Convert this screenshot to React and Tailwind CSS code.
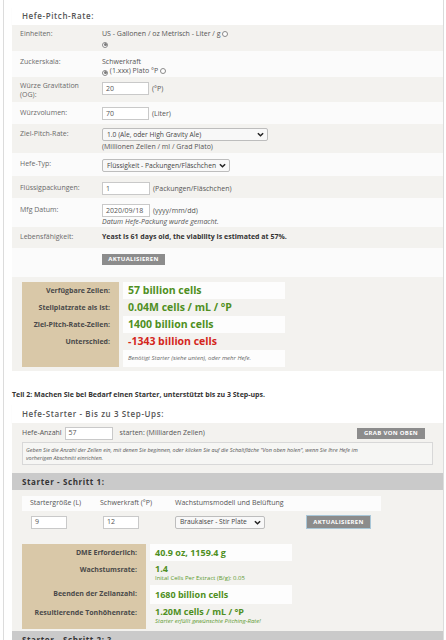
import React from 'react';

const Radio = ({ checked }) => (
  <span className="inline-flex h-[6px] w-[6px] items-center justify-center rounded-full border border-[#8a8a8a] bg-white align-[-1px]">
    {checked && <span className="h-[3px] w-[3px] rounded-full bg-[#7a7a7a]" />}
  </span>
);

const Field = ({ value, className }) => (
  <div className={`flex h-[13px] items-center border border-[#c9c9c9] bg-white pl-[3px] text-[7px] text-[#555] ${className}`}>
    {value}
  </div>
);

const Chevron = () => (
  <svg width="7" height="5" viewBox="0 0 8 5" className="shrink-0">
    <path d="M1 1l3 3 3-3" stroke="#222" strokeWidth="1.7" fill="none" />
  </svg>
);

const Select = ({ text, className }) => (
  <div className={`flex h-[13px] items-center justify-between gap-[2px] whitespace-nowrap rounded-[2px] border border-[#bdbdbd] bg-[#f8f8f8] pl-[4px] pr-[3px] text-[6.7px] text-[#444] ${className}`}>
    <span>{text}</span>
    <Chevron />
  </div>
);

const Button = ({ children, className }) => (
  <div className={`flex items-center justify-center bg-[#8c8c8c] text-[6px] font-bold tracking-[0.3px] text-white ${className}`}>
    {children}
  </div>
);

const Row = ({ label, className, labelPad, valuePad, children }) => (
  <div className={`flex ${className}`}>
    <div className={`w-[90px] shrink-0 pl-[8px] pr-[6px] text-[7px] leading-[9px] text-[#6a6a6a] ${labelPad}`}>{label}</div>
    <div className={`flex-1 text-[7px] leading-[9px] text-[#555] ${valuePad}`}>{children}</div>
  </div>
);

const ResultRow = ({ label, white, h, children, labelW, valueW }) => (
  <div className={`flex ${h}`}>
    <div className={`${labelW} shrink-0 bg-[#d9c8a8] pr-[9px] pt-[4px] text-right text-[7px] font-bold leading-[9px] text-[#4a4a4a]`}>
      {label}
    </div>
    <div className={`ml-[4px] ${valueW} pl-[5px] ${white ? 'bg-[#fdfdfd]' : ''}`}>{children}</div>
  </div>
);

export default function App() {
  return (
    <div className="min-h-screen bg-white font-['Open_Sans',sans-serif]">
      <div className="ml-[3px] w-[441px] border-x border-[#dcdcdc] pb-[20px] pl-[8px] pt-[7px]">
        {/* Panel 1 */}
        <div className="flex h-[18px] items-center bg-white pl-[10px] text-[8px] font-semibold tracking-[0.6px] text-[#555] shadow-[0_1px_1px_rgba(0,0,0,0.06)]">
          Hefe-Pitch-Rate:
        </div>

        <Row label="Einheiten:" className="h-[26px] bg-[#f3f2ef]" labelPad="pt-[4px]" valuePad="pt-[4px]">
          <div>
            US - Gallonen / oz Metrisch - Liter / g <Radio />
          </div>
          <div>
            <Radio checked />
          </div>
        </Row>

        <Row label="Zuckerskala:" className="h-[26px] bg-[#fbfbfb]" labelPad="pt-[6px]" valuePad="pt-[6px]">
          <div>Schwerkraft</div>
          <div>
            <Radio checked /> (1.xxx) Plato °P <Radio />
          </div>
        </Row>

        <Row label="Würze Gravitation (OG):" className="h-[25px] bg-[#f3f2ef]" labelPad="pt-[4px]" valuePad="pt-[5px]">
          <div className="flex items-center gap-[3px]">
            <Field value="20" className="w-[47px]" />
            <span>(°P)</span>
          </div>
        </Row>

        <Row label="Würzvolumen:" className="h-[22px] bg-[#fbfbfb]" labelPad="pt-[6px]" valuePad="pt-[5px]">
          <div className="flex items-center gap-[3px]">
            <Field value="70" className="w-[47px]" />
            <span>(Liter)</span>
          </div>
        </Row>

        <Row label="Ziel-Pitch-Rate:" className="h-[29px] bg-[#f3f2ef]" labelPad="pt-[5px]" valuePad="pt-[4px]">
          <Select text="1.0 (Ale, oder High Gravity Ale)" className="w-[166px]" />
          <div className="mt-[1px]">(Millionen Zellen / ml / Grad Plato)</div>
        </Row>

        <Row label="Hefe-Typ:" className="h-[23px] bg-[#fbfbfb]" labelPad="pt-[6px]" valuePad="pt-[6px]">
          <Select text="Flüssigkeit - Packungen/Fläschchen" className="w-[128px]" />
        </Row>

        <Row label="Flüssigpackungen:" className="h-[22px] bg-[#f3f2ef]" labelPad="pt-[7px]" valuePad="pt-[6px]">
          <div className="flex items-center gap-[3px]">
            <Field value="1" className="w-[48px]" />
            <span>(Packungen/Fläschchen)</span>
          </div>
        </Row>

        <Row label="Mfg Datum:" className="h-[29px] bg-[#fbfbfb]" labelPad="pt-[7px]" valuePad="pt-[6px]">
          <div className="flex items-center gap-[3px]">
            <Field value="2020/09/18" className="w-[48px]" />
            <span>(yyyy/mm/dd)</span>
          </div>
          <div className="italic">Datum Hefe-Packung wurde gemacht.</div>
        </Row>

        <Row label="Lebensfähigkeit:" className="h-[21px] bg-[#f3f2ef]" labelPad="pt-[5px]" valuePad="pt-[5px]">
          <div className="font-bold text-[#333]">Yeast is 61 days old, the viability is estimated at 57%.</div>
        </Row>

        <Row label="" className="h-[29px] bg-[#fbfbfb]" labelPad="" valuePad="pt-[6px]">
          <Button className="h-[11px] w-[63px]">AKTUALISIEREN</Button>
        </Row>

        {/* Results */}
        <div className="bg-[#f3f2ef] pb-[4px] pl-[10px] pt-[5px]">
          <ResultRow label="Verfügbare Zellen:" white h="h-[17px]" labelW="w-[97px]" valueW="w-[162px]">
            <div className="text-[10.5px] font-bold leading-[17px] text-[#4f8f22]">57 billion cells</div>
          </ResultRow>
          <ResultRow label="Stellplatzrate als Ist:" h="h-[17px]" labelW="w-[97px]" valueW="w-[162px]">
            <div className="text-[10.5px] font-bold leading-[17px] text-[#4f8f22]">0.04M cells / mL / °P</div>
          </ResultRow>
          <ResultRow label="Ziel-Pitch-Rate-Zellen:" white h="h-[17px]" labelW="w-[97px]" valueW="w-[162px]">
            <div className="text-[10.5px] font-bold leading-[17px] text-[#4f8f22]">1400 billion cells</div>
          </ResultRow>
          <ResultRow label="Unterschied:" h="h-[17px]" labelW="w-[97px]" valueW="w-[162px]">
            <div className="text-[10.5px] font-bold leading-[17px] text-[#d4261c]">-1343 billion cells</div>
          </ResultRow>
          <ResultRow label="" white h="h-[17px]" labelW="w-[97px]" valueW="w-[162px]">
            <div className="text-[6px] italic leading-[17px] text-[#666]">Benötigt Starter (siehe unten), oder mehr Hefe.</div>
          </ResultRow>
        </div>

        <div className="mt-[19px] text-[7px] font-bold leading-[10px] text-[#333]">
          Teil 2: Machen Sie bei Bedarf einen Starter, unterstützt bis zu 3 Step-ups.
        </div>

        {/* Panel 2 */}
        <div className="mt-[4px] flex h-[19px] items-center bg-white pl-[10px] text-[8px] font-semibold tracking-[0.6px] text-[#555] shadow-[0_1px_1px_rgba(0,0,0,0.06)]">
          Hefe-Starter - Bis zu 3 Step-Ups:
        </div>
        <div className="bg-[#f3f2ef]">
          <div className="px-[10px] pb-[8px] pt-[4px]">
            <div className="flex h-[13px] items-center text-[7px] text-[#555]">
              <span>Hefe-Anzahl</span>
              <Field value="57" className="ml-[3px] w-[48px]" />
              <span className="ml-[7px]">starten: (Milliarden Zellen)</span>
              <Button className="ml-auto mr-[8px] h-[11px] w-[68px]">GRAB VON OBEN</Button>
            </div>
            <div className="mt-[2px] h-[23px] border border-[#d8d8d8] bg-[#f6f6f4] px-[3px] pt-[3px] text-[5.5px] italic leading-[8px] text-[#555]">
              Geben Sie die Anzahl der Zellen ein, mit denen Sie beginnen, oder klicken Sie auf die Schaltfläche "Von oben holen", wenn Sie Ihre Hefe im
              <br />
              vorherigen Abschnitt einrichten.
            </div>
          </div>

          <div className="flex h-[17px] items-center bg-[#cacaca] pl-[10px] text-[8px] font-bold tracking-[0.6px] text-[#333]">
            Starter - Schritt 1:
          </div>

          <div className="px-[10px] pb-[2px] pt-[6px]">
            <div className="flex h-[15px] w-[359px] items-center bg-[#fcfcfc] text-[7px] text-[#555]">
              <span className="w-[78px] pl-[8px]">Startergröße (L)</span>
              <span className="w-[75px]">Schwerkraft (°P)</span>
              <span>Wachstumsmodell und Belüftung</span>
            </div>
            <div className="mt-[4px] flex items-center">
              <div className="w-[72px] pl-[9px]">
                <Field value="9" className="w-[36px]" />
              </div>
              <div className="w-[72px] pl-[9px]">
                <Field value="12" className="w-[36px]" />
              </div>
              <div className="w-[131px] pl-[9px]">
                <Select text="Braukaiser - Stir Plate" className="w-[90px]" />
              </div>
              <Button className="ml-[9px] h-[14px] w-[65px] border border-[#a9c7d8]">AKTUALISIEREN</Button>
            </div>

            <div className="mt-[15px]">
              <ResultRow label="DME Erforderlich:" white h="h-[17px]" labelW="w-[124px]" valueW="w-[142px]">
                <div className="text-[9px] font-bold leading-[17px] text-[#4f8f22]">40.9 oz, 1159.4 g</div>
              </ResultRow>
              <ResultRow label="Wachstumsrate:" h="h-[24px]" labelW="w-[124px]" valueW="w-[142px]">
                <div className="pt-[3px] text-[9px] font-bold leading-[10px] text-[#4f8f22]">1.4</div>
                <div className="text-[6px] leading-[8px] text-[#5c9a30]">Inital Cells Per Extract (B/g): 0.05</div>
              </ResultRow>
              <ResultRow label="Beenden der Zellanzahl:" white h="h-[19px]" labelW="w-[124px]" valueW="w-[142px]">
                <div className="text-[9px] font-bold leading-[19px] text-[#4f8f22]">1680 billion cells</div>
              </ResultRow>
              <ResultRow label="Resultierende Tonhöhenrate:" h="h-[25px]" labelW="w-[124px]" valueW="w-[142px]">
                <div className="pt-[3px] text-[9px] font-bold leading-[10px] text-[#4f8f22]">1.20M cells / mL / °P</div>
                <div className="text-[6px] italic leading-[8px] text-[#5c9a30]">Starter erfüllt gewünschte Pitching-Rate!</div>
              </ResultRow>
            </div>
          </div>

          <div className="flex h-[17px] items-center bg-[#cacaca] pl-[10px] text-[8px] font-bold tracking-[0.6px] text-[#333]">
            Starter - Schritt 2: ?
          </div>
        </div>
      </div>
    </div>
  );
}
